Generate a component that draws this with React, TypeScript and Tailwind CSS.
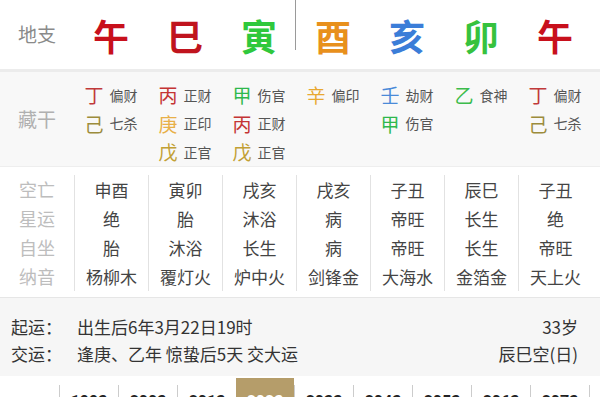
const branches = [
  { c: '午', color: 'text-[#c8101c]' },
  { c: '巳', color: 'text-[#c0141e]' },
  { c: '寅', color: 'text-[#2fc83c]' },
  { c: '酉', color: 'text-[#e8901c]' },
  { c: '亥', color: 'text-[#3b7dd8]' },
  { c: '卯', color: 'text-[#36c23e]' },
  { c: '午', color: 'text-[#c8101c]' },
];

const stemColor: Record<string, string> = {
  丁: 'text-[#c0393a]',
  丙: 'text-[#c43434]',
  己: 'text-[#9c8c3c]',
  庚: 'text-[#e8b048]',
  戊: 'text-[#c2a034]',
  甲: 'text-[#2fb84c]',
  辛: 'text-[#e8a832]',
  壬: 'text-[#4a8ad8]',
  乙: 'text-[#3cbc4c]',
};

const hidden: [string, string][][] = [
  [['丁', '偏财'], ['己', '七杀']],
  [['丙', '正财'], ['庚', '正印'], ['戊', '正官']],
  [['甲', '伤官'], ['丙', '正财'], ['戊', '正官']],
  [['辛', '偏印']],
  [['壬', '劫财'], ['甲', '伤官']],
  [['乙', '食神']],
  [['丁', '偏财'], ['己', '七杀']],
];

const details = [
  ['申酉', '绝', '胎', '杨柳木'],
  ['寅卯', '胎', '沐浴', '覆灯火'],
  ['戌亥', '沐浴', '长生', '炉中火'],
  ['戌亥', '病', '病', '剑锋金'],
  ['子丑', '帝旺', '帝旺', '大海水'],
  ['辰巳', '长生', '长生', '金箔金'],
  ['子丑', '绝', '帝旺', '天上火'],
];

const years = ['1993', '2003', '2013', '2023', '2033', '2043', '2053', '2063', '2073'];

export default function App() {
  return (
    <div className="w-[600px] h-[400px] overflow-hidden bg-white font-['Noto_Sans_CJK_SC',sans-serif]">
      {/* 地支 */}
      <div className="flex h-[72px] items-center border-b-[3px] border-[#ececec]">
        <div className="w-[74px] text-center text-[19px] text-[#8a8a8a]">地支</div>
        {branches.map((b, i) => (
          <div key={i} className={`relative flex h-full w-[74px] items-center justify-center text-[36px] font-bold ${b.color}`}>
            {b.c}
            {i === 2 && <span className="absolute right-0 top-0 h-[50px] w-px bg-[#9a9a9a]" />}
          </div>
        ))}
      </div>

      {/* 藏干 */}
      <div className="flex h-[94px] bg-[#f8f8f8] pt-[9px]">
        <div className="flex w-[74px] items-center justify-center pb-[9px] text-[19px] text-[#b0b0b0]">藏干</div>
        {hidden.map((col, i) => (
          <div key={i} className="flex w-[74px] flex-col items-center">
            {col.map(([s, n], j) => (
              <div key={j} className="flex h-[28.5px] items-center gap-[6px]">
                <span className={`text-[19px] ${stemColor[s]}`}>{s}</span>
                <span className="text-[14px] text-[#555]">{n}</span>
              </div>
            ))}
          </div>
        ))}
      </div>

      {/* 空亡 星运 自坐 纳音 */}
      <div className="flex h-[131px] border-t border-[#eeeeee] bg-white pb-[6px] pt-[8px]">
        <div className="flex w-[74px] flex-col items-center text-[18px] text-[#bdbdbd]">
          {['空亡', '星运', '自坐', '纳音'].map((t) => (
            <div key={t} className="flex h-[29px] shrink-0 items-center">{t}</div>
          ))}
        </div>
        {details.map((col, i) => (
          <div key={i} className="flex w-[74px] flex-col items-center border-l border-[#e2e2e2] text-[17px] text-[#444]">
            {col.map((t, j) => (
              <div key={j} className="flex h-[29px] shrink-0 items-center">{t}</div>
            ))}
          </div>
        ))}
      </div>

      {/* 起运 交运 */}
      <div className="flex h-[79px] flex-col justify-center border-t border-[#e6e6e6] bg-[#f6f6f6] pl-[11px] pr-[22px] pt-[6px] text-[17px] text-[#333]">
        <div className="flex h-[27px] items-center">
          <span className="w-[66px]">起运：</span>
          <span>出生后6年3月22日19时</span>
          <span className="ml-auto">33岁</span>
        </div>
        <div className="flex h-[27px] items-center">
          <span className="w-[66px]">交运：</span>
          <span>逢庚、乙年 惊蛰后5天 交大运</span>
          <span className="ml-auto">辰巳空(日)</span>
        </div>
      </div>

      {/* 大运年份 */}
      <div className="flex h-[21px] items-start overflow-hidden pl-[59px] pt-[2px] font-['Roboto',sans-serif] text-[16px] font-bold">
        {years.map((y) =>
          y === '2023' ? (
            <div key={y} className="h-[40px] w-[58px] bg-[#b59d6a] pt-[12px] text-center text-white">{y}</div>
          ) : (
            <div key={y} className="mt-[7px] h-[40px] w-[59px] border-l border-[#cccccc] pt-[5px] text-center text-[#222]">{y}</div>
          )
        )}
        <div className="mt-[7px] h-[40px] border-l border-[#cccccc]" />
      </div>
    </div>
  );
}
